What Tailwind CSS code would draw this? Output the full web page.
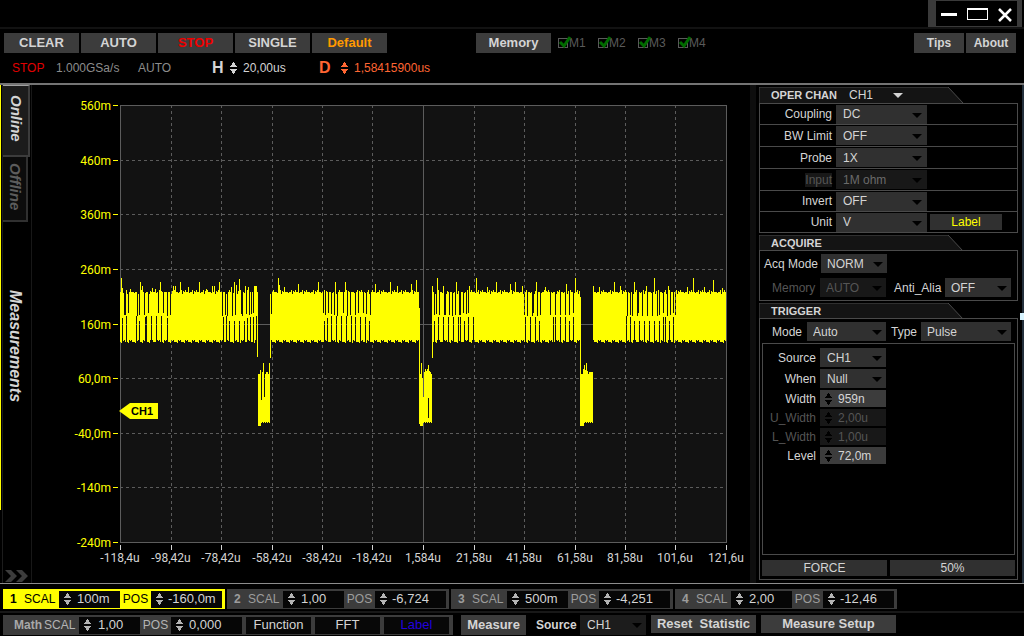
<!DOCTYPE html>
<html lang="en">
<head>
  <meta charset="UTF-8" />
  <meta name="viewport" content="width=device-width, initial-scale=1.0" />
  <title>Oscilloscope</title>
  <script src="https://cdn.jsdelivr.net/npm/@tailwindcss/browser@4"></script>
</head>
<body class="bg-black text-[#d4d4d4] font-['Liberation_Sans',Arial,sans-serif] text-[12px] leading-4">
  <svg class="hidden">
    <symbol id="spin" viewBox="0 0 7 12"><path d="M3 0h1v1h1v2h1v1h1v1H0V4h1V3h1V1h1zM0 7h7v1H6v1H5v2H4v1H3v-1H2V9H1V8H0z" fill="currentColor" /></symbol>
    <symbol id="down" viewBox="0 0 10 5"><path d="M0 0h10L5 5z" fill="currentColor" /></symbol>
    <symbol id="tick" viewBox="0 0 14 13"><path d="M2 6l4 4 6-9" fill="none" stroke="#006a00" stroke-width="3" /></symbol>
  </svg>

  <div class="flex flex-col h-screen overflow-hidden">
    <!-- Title bar -->
    <header class="flex justify-end h-[29px] shrink-0 border-b-2 border-[#121212]">
      <div class="flex items-center gap-1.5 bg-black border-l-8 border-r-5 border-y border-[#3a3a3a] mr-[2px] pl-1 pr-[3px]">
        <button aria-label="Minimize" class="w-5 h-5"><svg class="w-5 h-5" viewBox="0 0 20 20"><path d="M1 9h16v3H1z" fill="#fff" /></svg></button>
        <button aria-label="Maximize" class="w-[22px] h-5"><svg class="w-[22px] h-5" viewBox="0 0 22 20"><path d="M1 4h21v12H1zM2 6v9h19V6z" fill="#fff" fill-rule="evenodd" /></svg></button>
        <button aria-label="Close" class="w-5 h-5"><svg class="w-5 h-5" viewBox="0 0 20 20"><path d="M5 5l12 12M17 5L5 17" stroke="#fff" stroke-width="2.5" /></svg></button>
      </div>
    </header>

    <!-- Main toolbar -->
    <div class="flex items-center justify-between h-[28px] shrink-0 pl-1 pr-2 text-[13px] font-bold">
      <div class="flex items-center gap-[2px]">
        <button class="w-[75px] h-5 bg-[#3c3c3c]">CLEAR</button>
        <button class="w-[75px] h-5 bg-[#3c3c3c]">AUTO</button>
        <button class="w-[75px] h-5 bg-[#3c3c3c] text-[#f00000]">STOP</button>
        <button class="w-[75px] h-5 bg-[#3c3c3c]">SINGLE</button>
        <button class="w-[75px] h-5 bg-[#3c3c3c] text-[#ff9900]">Default</button>
        <button class="w-[75px] h-5 bg-[#3c3c3c] ml-[87px]">Memory</button>
        <div id="memories" class="flex gap-[1px] ml-[3px] text-[12px] font-normal text-[#5a5a5a]"></div>
      </div>
      <div class="flex gap-[2px] text-[12px]">
        <button class="w-[50px] h-5 bg-[#3c3c3c]">Tips</button>
        <button class="w-[50px] h-5 bg-[#3c3c3c]">About</button>
      </div>
    </div>

    <!-- Acquisition status -->
    <div class="flex items-center h-[28px] shrink-0 pl-3 pb-1 border-b-2 border-[#747474]">
      <span class="w-11 text-[#e00000]">STOP</span>
      <span class="w-[82px] text-[#8c8c8c]">1.000GSa/s</span>
      <span class="w-[74px] text-[#8c8c8c]">AUTO</span>
      <label for="hscale" class="w-[18px] text-[16px] font-bold">H</label>
      <svg class="w-[7px] h-3"><use href="#spin" /></svg>
      <input id="hscale" value="20,00us" class="w-[82px] pl-[6px]" />
      <label for="hdelay" class="w-[22px] text-[16px] font-bold text-[#ff6633]">D</label>
      <svg class="w-[7px] h-3 text-[#ff6633]"><use href="#spin" /></svg>
      <input id="hdelay" value="1,58415900us" class="w-24 pl-[6px] text-[#ff6633]" />
    </div>

    <main class="flex flex-1 min-h-0 border-b border-[#8c8c8c]">
      <!-- Side tabs -->
      <nav class="flex w-8 shrink-0 border-r border-[#181818]">
        <div class="w-[1px] h-[425px] bg-[#ffff00]"></div>
        <div class="flex flex-col flex-1 ml-[1px] border-l border-[#1c1c1c] font-bold italic">
          <button class="w-[27px] h-[72px] bg-[#1c1c1c] border-t border-t-[#a0a0a0] border-r-2 border-b-2 border-r-[#3c3c3c] border-b-[#3c3c3c] text-[15px] [writing-mode:vertical-rl] pb-1">Online</button>
          <button class="w-[25px] h-[65px] bg-[#0c0c0c] border-r-2 border-b-2 border-[#303030] text-[15px] text-[#5c5c5c] [writing-mode:vertical-rl] pb-1">Offline</button>
          <button class="w-6 h-[112px] mt-[68px] text-[16px] [writing-mode:vertical-rl]">Measurements</button>
          <button aria-label="Expand" class="mt-auto ml-[1px] w-6 h-[14px]"><svg class="w-6 h-[14px]" viewBox="0 0 24 14"><path d="M1 1h6l6 6-6 6H1l6-6zM12 1h6l6 6-6 6h-6l6-6z" fill="#3c3c3c" /></svg></button>
        </div>
      </nav>

      <!-- Waveform display, drawn in window coordinates -->
      <svg class="flex-1 min-w-0 h-full" viewBox="32 85 718 498">
        <path d="M120 105h607v438H120z" fill="#121212" />
        <g id="grid" shape-rendering="crispEdges"></g>
        <path id="wave" fill="#ffff00" shape-rendering="crispEdges" />
        <path d="M119 411l11-8h28v16h-28z" fill="#ffff00" />
        <text x="131" y="415" class="text-[11px] font-bold">CH1</text>
        <g id="axisY" class="font-[Roboto,sans-serif] text-[12px]" fill="#ffff00" text-anchor="end"></g>
        <g id="axisX" class="font-[Roboto,sans-serif] text-[12px]" fill="#d4d4d4" text-anchor="middle"></g>
      </svg>

      <!-- Settings -->
      <aside class="relative flex flex-col w-[274px] shrink-0 border-l-6 border-r-2 border-l-[#0e0e0e] border-r-[#24303c] pl-[3px] pr-1 pt-[2px] pb-[3px]">
        <div class="relative flex items-center h-4 shrink-0 pl-3">
          <svg class="absolute left-0 top-0 w-[206px] h-4"><path d="M0 16V0h189l15 16" fill="#141414" stroke="#4a4a4a" /></svg>
          <label for="operchan" class="relative w-[72px] text-[11px] font-bold">OPER CHAN</label>
          <div class="relative">
            <select id="operchan" class="appearance-none w-[66px] h-4 pl-[6px]"><option>CH1</option><option>CH2</option></select>
            <svg class="absolute right-[6px] top-[6px] w-[10px] h-[5px] pointer-events-none"><use href="#down" /></svg>
          </div>
        </div>
        <div id="channel" class="shrink-0 border border-[#4a4a4a] divide-y divide-[#4a4a4a]"></div>

        <div class="relative flex items-center h-[15px] shrink-0 mt-[2px] pl-3">
          <svg class="absolute left-0 top-0 w-[206px] h-[15px]"><path d="M0 16V0h189l15 16" fill="#141414" stroke="#4a4a4a" /></svg>
          <h2 class="relative text-[11px] font-bold">ACQUIRE</h2>
        </div>
        <div class="flex flex-col gap-[5px] h-[51px] shrink-0 border border-[#4a4a4a] pt-[3px] pl-1">
          <div class="flex items-center">
            <label for="acqmode" class="w-[57px]">Acq Mode</label>
            <div class="relative">
              <select id="acqmode" class="appearance-none block w-[66px] h-[19px] pl-[6px] bg-[#303030]"><option>NORM</option><option>PEAK</option></select>
              <svg class="absolute right-1 top-[8px] w-[10px] h-[5px] text-black pointer-events-none"><use href="#down" /></svg>
            </div>
          </div>
          <div class="flex items-center">
            <label for="acqmem" class="w-[56px] pl-2 text-[#555555]">Memory</label>
            <div class="relative">
              <select id="acqmem" disabled class="appearance-none block w-[66px] h-[19px] pl-[6px] bg-[#181818] text-[#555555] opacity-100"><option>AUTO</option></select>
              <svg class="absolute right-1 top-[8px] w-[10px] h-[5px] text-black pointer-events-none"><use href="#down" /></svg>
            </div>
            <label for="alias" class="w-[59px] pl-2">Anti_Alia</label>
            <div class="relative">
              <select id="alias" class="appearance-none block w-[66px] h-[19px] pl-[6px] bg-[#303030]"><option>OFF</option><option>ON</option></select>
              <svg class="absolute right-1 top-[8px] w-[10px] h-[5px] text-black pointer-events-none"><use href="#down" /></svg>
            </div>
          </div>
        </div>

        <div class="relative flex items-center h-[15px] shrink-0 mt-[2px] pl-3">
          <svg class="absolute left-0 top-0 w-[206px] h-[15px]"><path d="M0 16V0h189l15 16" fill="#141414" stroke="#4a4a4a" /></svg>
          <h2 class="relative text-[11px] font-bold">TRIGGER</h2>
        </div>
        <div class="flex flex-col flex-1 border border-[#4a4a4a] pt-[3px] px-[2px] pb-[3px]">
          <div class="flex items-center pl-[10px]">
            <label for="trigmode" class="w-[35px]">Mode</label>
            <div class="relative">
              <select id="trigmode" class="appearance-none block w-[79px] h-[19px] pl-[6px] bg-[#303030]"><option>Auto</option><option>Normal</option></select>
              <svg class="absolute right-1 top-[8px] w-[10px] h-[5px] text-black pointer-events-none"><use href="#down" /></svg>
            </div>
            <label for="trigtype" class="w-[35px] pl-[5px]">Type</label>
            <div class="relative">
              <select id="trigtype" class="appearance-none block w-[90px] h-[19px] pl-[6px] bg-[#303030]"><option>Pulse</option><option>Edge</option></select>
              <svg class="absolute right-1 top-[8px] w-[10px] h-[5px] text-black pointer-events-none"><use href="#down" /></svg>
            </div>
          </div>
          <div id="trigger" class="flex flex-col gap-[2px] flex-1 border border-[#4a4a4a] mt-[2px] pt-1"></div>
          <div class="flex gap-[3px] mt-[5px]">
            <button class="flex-1 h-4 bg-[#303030]">FORCE</button>
            <button class="flex-1 h-4 bg-[#303030]">50%</button>
          </div>
        </div>
        <div class="absolute -right-[2px] top-[228px] w-1 h-[7px] bg-[#d8f4ff]"></div>
      </aside>
    </main>

    <footer class="shrink-0">
      <div id="channels" class="flex gap-[2px] pl-[3px] pt-[5px] pb-[2px] border-b-2 border-[#181818]"></div>
      <!-- Math and measure bar -->
      <div class="flex pl-[3px] pt-[2px] pb-[1px]">
        <div class="flex items-center gap-1 h-5 bg-[#3c3c3c] pl-[11px] pr-1">
          <div class="flex items-center">
            <span class="w-[30px] font-bold text-[#a8a8a8]">Math</span>
            <label for="mscal" class="w-[35px] text-[#b4b4b4]">SCAL</label>
            <div class="flex items-center bg-[#060606] h-[17px] w-[61px] pl-[5px]">
              <svg class="w-[7px] h-3 shrink-0 text-[#b4b4b4]"><use href="#spin" /></svg>
              <input id="mscal" value="1,00" class="w-full min-w-0 pl-[7px] text-[13px]" />
            </div>
            <label for="mpos" class="w-[31px] text-center text-[#b4b4b4]">POS</label>
            <div class="flex items-center bg-[#060606] h-[17px] w-[71px] pl-[5px]">
              <svg class="w-[7px] h-3 shrink-0 text-[#b4b4b4]"><use href="#spin" /></svg>
              <input id="mpos" value="0,000" class="w-full min-w-0 pl-[6px] text-[13px]" />
            </div>
          </div>
          <button class="w-[65px] h-[17px] bg-[#080808] text-[13px]">Function</button>
          <button class="w-[65px] h-[17px] bg-[#080808] text-[13px]">FFT</button>
          <button class="w-[65px] h-[17px] bg-[#080808] text-[13px] text-[#2200dd]">Label</button>
        </div>
        <button class="w-[65px] h-5 ml-[8px] bg-[#3c3c3c] text-[13px] font-bold">Measure</button>
        <label for="msource" class="w-[54px] pl-[10px] leading-5 font-bold">Source</label>
        <div class="relative">
          <select id="msource" class="appearance-none block w-[66px] h-5 pl-[7px] bg-[#1c1c1c]"><option>CH1</option><option>CH2</option></select>
          <svg class="absolute right-1 top-[8px] w-[10px] h-[5px] text-black pointer-events-none"><use href="#down" /></svg>
        </div>
        <button class="w-[105px] h-[18px] ml-[5px] bg-[#3c3c3c] text-[13px] font-bold">Reset &nbsp;Statistic</button>
        <button class="w-[135px] h-[18px] ml-[5px] bg-[#3c3c3c] text-[13px] font-bold">Measure Setup</button>
      </div>
    </footer>
  </div>

  <script>
    const byId = id => document.getElementById(id);

    byId("memories").innerHTML = [1, 2, 3, 4].map(n => `
      <label class="relative flex items-center w-[39px]">
        <input type="checkbox" checked class="peer appearance-none w-[10px] h-[10px] ml-[2px] mr-[1px] border border-[#5a5a5a]" />
        <svg class="absolute left-[2px] top-[1px] w-[14px] h-[13px] hidden peer-checked:block"><use href="#tick" /></svg>
        M${n}
      </label>`).join("");

    // Channel settings: [label, value, row height, disabled]
    const channelRows = [
      ["Coupling", "DC", "h-[21px]"], ["BW Limit", "OFF", "h-[22px]"], ["Probe", "1X", "h-[22px]"],
      ["Input", "1M ohm", "h-[22px]", true], ["Invert", "OFF", "h-[21px]"], ["Unit", "V", "h-[20px]"]
    ];
    byId("channel").innerHTML = channelRows.map(([name, value, height, off], i) => `
      <div class="flex items-center ${height}">
        <label for="ch${i}" class="w-[76px] pr-1 text-right ${off ? "text-[#555555]" : ""}">${off ? `<span class="bg-[#181818]">${name}</span>` : name}</label>
        <div class="relative">
          <select id="ch${i}" ${off ? "disabled" : ""} class="appearance-none block w-[91px] h-[19px] pl-[7px] opacity-100 ${off ? "bg-[#181818] text-[#6a6a6a]" : "bg-[#303030]"}"><option>${value}</option></select>
          <svg class="absolute right-[5px] top-[8px] w-[10px] h-[5px] text-black pointer-events-none"><use href="#down" /></svg>
        </div>
        ${name === "Unit" ? `<button class="w-[72px] h-4 ml-[3px] bg-[#303030] text-[#ffff00]">Label</button>` : ""}
      </div>`).join("");

    // Trigger settings: [label, value, type, disabled]
    const triggerRows = [
      ["Source", "CH1", "select"], ["When", "Null", "select"], ["Width", "959n", "spin"],
      ["U_Width", "2,00u", "spin", true], ["L_Width", "1,00u", "spin", true], ["Level", "72,0m", "spin"]
    ];
    byId("trigger").innerHTML = triggerRows.map(([name, value, type, off], i) => `
      <div class="flex items-center ${off ? "text-[#555555]" : ""}">
        <label for="tr${i}" class="w-[57px] pr-1 text-right">${name}</label>
        ${type === "select" ? `
        <div class="relative">
          <select id="tr${i}" class="appearance-none block w-[66px] h-[19px] pl-[7px] bg-[#303030]"><option>${value}</option></select>
          <svg class="absolute right-1 top-[8px] w-[10px] h-[5px] text-black pointer-events-none"><use href="#down" /></svg>
        </div>` : `
        <div class="flex items-center w-[66px] h-[17px] pl-[5px] ${off ? "bg-[#181818]" : "bg-[#3c3c3c]"}">
          <svg class="w-[7px] h-3 shrink-0 text-black"><use href="#spin" /></svg>
          <input id="tr${i}" value="${value}" ${off ? "disabled" : ""} class="w-full min-w-0 pl-[6px]" />
        </div>`}
      </div>`).join("");

    // Vertical scale and position of each channel
    const channels = [["100m", "-160,0m"], ["1,00", "-6,724"], ["500m", "-4,251"], ["2,00", "-12,46"]];
    byId("channels").innerHTML = channels.map(([scal, pos], i) => `
      <div class="flex items-center h-5 w-[222px] pl-[7px] ${i === 0 ? "bg-[#ffff00] text-black" : "bg-[#3c3c3c] text-[#9c9c9c]"}">
        <span class="w-[14px] font-bold">${i + 1}</span>
        <label for="scal${i}" class="w-[35px]">SCAL</label>
        <div class="flex items-center bg-[#060606] h-[17px] w-[61px] pl-[5px] text-[#d4d4d4]">
          <svg class="w-[7px] h-3 shrink-0 text-[#b4b4b4]"><use href="#spin" /></svg>
          <input id="scal${i}" value="${scal}" class="w-full min-w-0 pl-[6px] text-[13px]" />
        </div>
        <label for="pos${i}" class="w-[31px] text-center">POS</label>
        <div class="flex items-center bg-[#060606] h-[17px] w-[71px] pl-[5px] text-[#d4d4d4]">
          <svg class="w-[7px] h-3 shrink-0 text-[#b4b4b4]"><use href="#spin" /></svg>
          <input id="pos${i}" value="${pos}" class="w-full min-w-0 pl-[5px] text-[13px]" />
        </div>
      </div>`).join("");

    // Grid and axes
    const xs = [120, 171, 221, 272, 322, 372, 423, 474, 524, 575, 625, 675, 726];
    const ys = [105, 160, 214, 269, 324, 378, 433, 487, 542];
    const xLabels = ["-118,4u", "-98,42u", "-78,42u", "-58,42u", "-38,42u", "-18,42u", "1,584u", "21,58u", "41,58u", "61,58u", "81,58u", "101,6u", "121,6u"];
    const yLabels = ["560m", "460m", "360m", "260m", "160m", "60,0m", "-40,0m", "-140m", "-240m"];
    const solid = (i, n) => i === 0 || i === n || i === n / 2;
    const dash = on => on ? "" : 'stroke-dasharray="3 3"';
    byId("grid").innerHTML =
      xs.map((x, i) => `<path d="M${x + 0.5} 105v438" stroke="#5c5c5c" ${dash(solid(i, 12))} />`).join("") +
      ys.map((y, i) => `<path d="M120 ${y + 0.5}h607" stroke="#5c5c5c" ${dash(solid(i, 8))} />`).join("");
    byId("axisX").innerHTML = xs.map((x, i) => `<path d="M${x} 545h1v5h-1z" /><text x="${x}" y="562">${xLabels[i]}</text>`).join("");
    byId("axisY").innerHTML = ys.map((y, i) => `<path d="M113 ${y}h5v1h-5z" /><text x="111" y="${y + 5}">${yLabels[i]}</text>`).join("");

    // Waveform: one bar per pixel column
    const spikes = {
      121: 278, 122: 288, 130: 289, 137: 289, 140: 282, 142: 286, 152: 288, 160: 282, 155: 289, 173: 286, 175: 286,
      180: 282, 188: 287, 199: 282, 206: 289, 212: 286, 214: 286, 219: 282, 231: 287, 234: 282, 236: 285, 239: 279,
      245: 286, 248: 287, 254: 286, 255: 286, 256: 286,
      278: 278, 279: 285, 284: 287, 298: 284, 318: 282, 335: 282, 345: 282, 347: 286, 355: 286, 375: 284, 390: 282, 397: 286, 411: 284, 416: 280,
      432: 286, 437: 278, 443: 286, 456: 282, 459: 286, 469: 286, 476: 278, 487: 287, 496: 282, 510: 284, 515: 282, 522: 286,
      536: 282, 540: 287, 545: 287, 555: 282, 566: 284, 575: 278, 592: 286, 593: 286, 599: 287, 614: 282, 620: 286, 634: 282,
      646: 286, 654: 278, 668: 286, 673: 282, 687: 287, 693: 278, 704: 287, 713: 280, 722: 288
    };
    const upper = [124, 125, 128, 137, 139, 144, 148, 158, 163, 167, 170, 222, 225, 227, 232, 235, 241, 242, 246, 249, 251, 253,
      271, 323, 325, 328, 331, 334, 337, 343, 347, 350, 355, 358, 363, 366, 370,
      434, 436, 439, 444, 445, 449, 452, 455, 459, 460, 463, 466, 468, 524, 527, 532, 533, 537, 540, 550, 555, 560, 565, 569, 573,
      627, 630, 632, 637, 638, 642, 647, 652, 657, 659, 663, 667, 670, 673, 675];
    const lower = [122, 126, 136, 139, 145, 146, 151, 156, 161, 167, 223, 226, 229, 234, 239, 244, 247, 250, 253, 256,
      324, 327, 331, 336, 341, 346, 351, 355, 360, 365, 369,
      434, 438, 443, 448, 453, 458, 460, 464, 468, 473, 525, 530, 535, 539, 553, 555, 560, 565, 569, 573,
      626, 630, 634, 639, 644, 649, 654, 659, 663, 665, 669, 673];
    const tops = [292, 292, 290, 293, 292, 291, 292, 292, 290, 294, 292];
    const bottoms = [342, 340, 342, 343, 340, 342, 341];
    const upperEnds = [315, 314, 316, 313, 315];
    const lowerStarts = [317, 316, 318, 317, 321];
    // [first column, top of each column] for the three low pulses
    const pulses = [
      [258, [374, 374, 370, 400, 372, 363, 397, 374, 372, 372, 374, 363]],
      [420, [374, 363, 378, 397, 372, 369, 371, 369, 365, 371, 372, 374]],
      [581, [374, 374, 369, 365, 370, 363, 371, 374, 372, 372, 372, 372]]
    ];
    let d = "";
    const bar = (x, top, bottom) => { d += `M${x} ${top}h1V${bottom}h-1z`; };
    for (let x = 120; x < 726; x++) {
      const pulse = pulses.find(([start]) => x >= start && x < start + 12);
      if (pulse) {
        const k = x - pulse[0];
        const bottom = k < 3 ? 426 : 422 + k % 2;
        if (x === 428) { bar(x, pulse[1][k], 398); bar(x, 418, bottom); }
        else bar(x, pulse[1][k], bottom);
        continue;
      }
      const top = spikes[x] || tops[(x * 7) % 11];
      const bottom = bottoms[(x * 5) % 7];
      if (x === 257) bar(x, 292, 357);
      else if (x === 419) bar(x, 308, 424);
      else if (x === 580) bar(x, 297, 426);
      else if (x === 270 || x === 432) bar(x, top, 358);
      else bar(x, upper.includes(x) ? upperEnds[x % 5] : top, lower.includes(x) ? lowerStarts[x % 5] : bottom);
    }
    byId("wave").setAttribute("d", d);
  </script>
</body>
</html>
